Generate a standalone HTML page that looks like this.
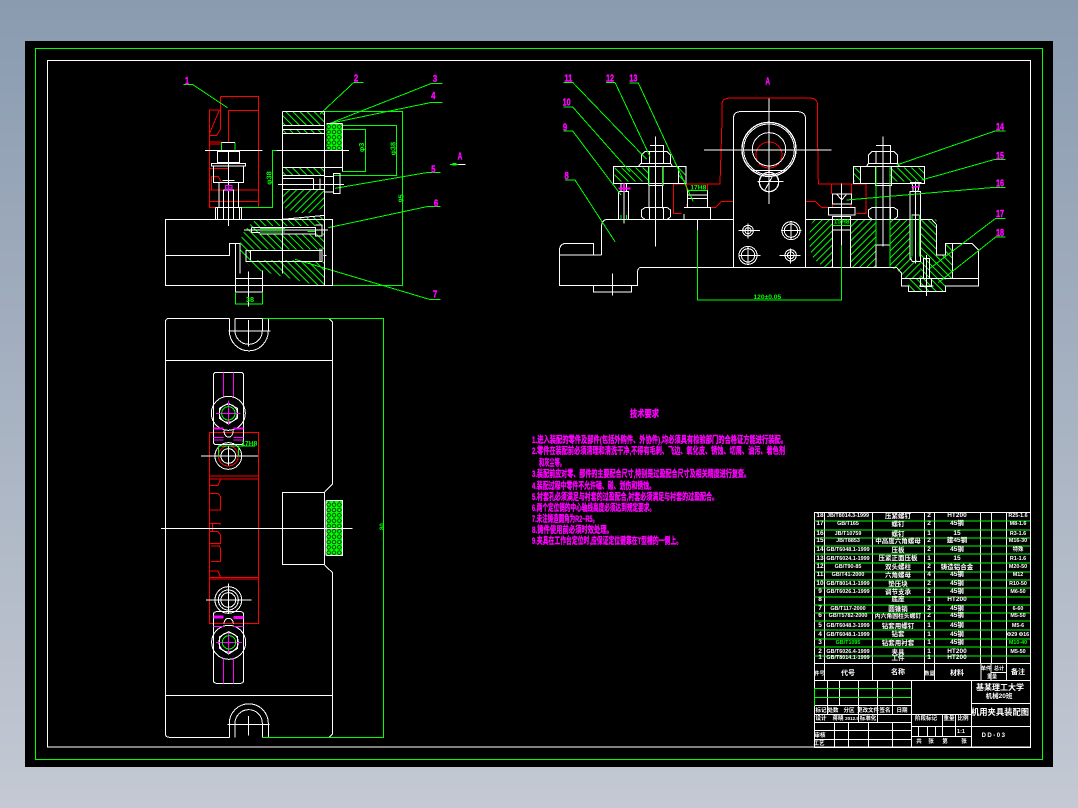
<!DOCTYPE html>
<html><head><meta charset="utf-8"><style>
html,body{margin:0;padding:0;width:1078px;height:808px;overflow:hidden;background:linear-gradient(#8a9bb0,#c4c9d3)}
svg{display:block;position:absolute;left:0;top:0}
text{font-family:"Liberation Sans","WenQuanYi Zen Hei","Noto Sans CJK SC",sans-serif}
.c{font-size:5.4px}
.l text{fill:#f0f;stroke:#f0f;stroke-width:1.2px;font-size:30px;font-weight:bold;text-anchor:middle}
</style></head><body>
<svg width="1078" height="808" viewBox="0 0 1078 808" shape-rendering="crispEdges" fill="none">
<defs>
<pattern id="h1" width="15" height="15" patternUnits="userSpaceOnUse" patternTransform="rotate(45)"><rect width="15" height="3" fill="#0f0"/></pattern>
<pattern id="h2" width="15" height="15" patternUnits="userSpaceOnUse" patternTransform="rotate(-45)"><rect width="15" height="3" fill="#0f0"/></pattern>
<pattern id="k" width="16" height="16" patternUnits="userSpaceOnUse"><rect width="16" height="16" fill="#0f0"/><circle cx="8" cy="8" r="5.5" fill="none" stroke="#000" stroke-width="2"/></pattern>
</defs>
<rect x="25" y="41" width="1028" height="726" fill="#000"/>
<rect x="35.5" y="48.5" width="1007" height="711" stroke="#0f0"/>
<rect x="47.5" y="60.5" width="983" height="686.5" stroke="#fff"/>

<!-- VIEW 1 -->
<g transform="translate(150 60) scale(.33333)" stroke-width="3">
<g stroke="none">
<path fill="url(#h1)" d="M397,154H524V196H397ZM397,208H524V220H397ZM397,322H524V346H397Z"/>
<path fill="url(#h2)" d="M397,390H524V440Q460,480 397,440Z"/>
<path fill="url(#h1)" d="M320,478L397,478L524,466V498H330V520H524V568H300V600H430L524,606V676H500L320,630Q275,610 270,560Q270,510 320,478Z"/>
<rect x="530" y="190" width="48" height="80" fill="url(#k)"/>
</g>
<g stroke="#f00">
<path d="M211,109H325V442H178V150H208L178,222M211,109V208L200,226H178M235,248V151H325M178,246H214M178,252H214M178,326H235M178,390H325M178,424H325M184,350H205L215,368M184,350V390"/>
</g>
<g stroke="#0f0">
<path d="M215,248V272M255,248V272M268,442H367V271H397M524,154H758V676H548M578,208H647V335H578M578,196H740V346H550"/>
<path d="M100,73H127L232,143M640,67H612L510,162M878,70H845L540,190M878,127H845L540,190M872,337H835L555,385M872,439H835L535,503M872,718H838L435,598M900,313H925"/>
<path d="M256,698V732H338V698M330,505H405M330,516H405M472,514H496" />
</g>
<g stroke="#fff">
<path d="M46,478H548V676H46ZM46,586H238V550H270M256,550V696M338,632V696M256,655H338M256,696H338M295,635V740"/>
<path d="M215,248H255M202,274H268V308H202ZM235,274V308M184,310H287V318H184ZM190,318V368H281V318M218,362H253M207,368V442M265,368V442M220,390H250V478M220,390V478M196,442H275V478M196,442V478M202,442V478M268,442V478M235,275V498M165,271H338"/>
<path d="M397,154H524V676M397,154V640M397,196H524M397,220H524M397,208H524M380,271H597M397,322H578M397,346H524M524,190V270M578,190V335M530,190H578"/>
<path d="M397,356H490M397,388H524M490,356V388M510,356V388M524,350H550M524,396H550M550,340H570V400H550ZM384,373H582"/>
<path d="M282,510H534M305,503H496V528H516V495H496M330,522H496M305,518H330M305,503V518"/>
<path d="M288,572H516V604H288ZM302,572V600M516,566V606M510,566V606M520,586H530"/>
<path d="M397,478L524,466M270,550V640"/>
</g>
<rect x="925" y="312" width="22" height="3" fill="#fff"/>
<rect x="908" y="309" width="12" height="8" fill="#0f0"/>
<path d="M226,376H246V392H226ZM236,376V392M226,384H246" stroke="#f0f"/>
<g class="l">
<text x="111" y="72" textLength="12" lengthAdjust="spacingAndGlyphs">1</text><text x="618" y="64" textLength="13" lengthAdjust="spacingAndGlyphs">2</text><text x="855" y="66" textLength="13" lengthAdjust="spacingAndGlyphs">3</text><text x="850" y="117" textLength="13" lengthAdjust="spacingAndGlyphs">4</text><text x="850" y="337" textLength="13" lengthAdjust="spacingAndGlyphs">5</text><text x="858" y="439" textLength="13" lengthAdjust="spacingAndGlyphs">6</text><text x="855" y="713" textLength="13" lengthAdjust="spacingAndGlyphs">7</text><text x="930" y="298" textLength="14" lengthAdjust="spacingAndGlyphs">A</text>
</g>
<g fill="#0f0" font-size="22" font-weight="bold" text-anchor="middle">
<text transform="translate(364 354) rotate(-90)">φ38</text>
<text transform="translate(642 262) rotate(-90)">φ3</text>
<text transform="translate(736 266) rotate(-90)">φ38</text>
<text transform="translate(760 415) rotate(-90)">95</text>
<text x="300" y="726">38</text>
</g>
</g>

<!-- VIEW 2 -->
<g transform="translate(550 60) scale(.33333)" stroke-width="3">
<g stroke="none">
<path fill="url(#h1)" d="M193,322H295V365H193ZM385,322H408V365H385ZM912,322H930V365H912ZM1020,322H1122V365H1020Z"/>
<path fill="url(#h2)" d="M790,478Q765,540 790,595L820,622H848V478ZM903,478H978V622H903Z"/>
<path fill="url(#h2)" d="M1022,478H1082V590L1112,606V655H1055V640L1022,622Z"/>
<path fill="url(#h1)" d="M1112,478H1160V585H1187V550H1207V655H1187V695H1075V655H1112ZM1112,478V590L1140,606V655H1112Z"/>
</g>
<g stroke="#f00">
<path d="M370,372H510L516,184V130Q518,115 540,114H780Q800,115 802,130V184L805,372H948V460H920M370,372V460H395"/>
<path d="M410,372V392M472,372V392M845,372V402M905,372V402M470,442H498L514,424H550M767,424H795L815,442H835M410,432L412,442M472,432V442M848,432V442M903,432V442"/>
<circle cx="657" cy="285" r="39"/>
</g>
<g stroke="#fff">
<path d="M550,622V175Q552,155 570,155H745Q765,157 767,175V622"/>
<circle cx="657" cy="268" r="81" stroke-width="4"/><circle cx="657" cy="268" r="76"/><circle cx="657" cy="268" r="50"/>
<circle cx="657" cy="366" r="29" stroke-width="4"/>
<path d="M462,270H845M657,115V432M622,365H700M607,332H707M645,390L672,340"/>
<circle cx="594" cy="512" r="16"/><circle cx="594" cy="512" r="9"/><path d="M565,512H630M594,490V535"/>
<circle cx="723" cy="512" r="27"/><circle cx="723" cy="512" r="20"/><path d="M693,512H755M723,485V540"/>
<circle cx="594" cy="586" r="27"/><circle cx="594" cy="586" r="20"/><path d="M565,586H632M594,558V615"/>
<circle cx="722" cy="586" r="17"/><circle cx="722" cy="586" r="10"/><path d="M688,586H752M722,565V610"/>
<path d="M155,585V495Q157,478 175,478H550M767,478H1145L1160,495V585H1187V550H1265L1285,570V678H1187V695H1075V678H1055V640L1040,622H270Q262,628 262,640V676H28V570Q30,550 50,550H130V585H155M28,585H130M130,676V696H245V676M187,640V706M550,622H1040M848,622V470H902V622M1055,655H1285M1207,550V655"/>
<path d="M190,320H408V370H190ZM297,320V445M337,320V445M295,320V376M339,320V376H295M386,320V370M265,320L272,310H362L368,320M274,310V285L285,275H352L362,285V310M298,310V275M340,310V275M300,256H340V275M316,230V560M274,450L285,443H352L362,450V470L352,478H285L274,470ZM298,443V478M340,443V478"/>
<path d="M205,395H236V478H205ZM205,370H240M213,370V395M230,370V395M222,370V490"/>
<path d="M412,392H472V442H412ZM412,405H472M412,415H472M402,442H482V478H402M402,462V478M482,462V478"/>
<path d="M910,320H1124V370H910ZM978,320V622M1020,320V622M976,320V376H1024V320M932,320V370M949,320L955,310H1043L1049,320M955,310V285L966,275H1032L1043,285V310M978,310V275M1022,310V275M978,256H1022V275M999,230V560M955,450L966,443H1032L1043,450V470L1032,478H966L955,470ZM978,443V478M1022,443V478M978,555H1020"/>
<path d="M1080,395H1112V605H1088L1080,595ZM1080,368H1115M1086,368L1090,395M1108,368L1104,395M1097,365V610M1085,465H1108"/>
<path d="M847,402H904V432H847ZM860,402L875,420L890,402M835,442H915V465H835ZM875,370V555M848,510H902"/>
<path d="M1120,595H1138V655H1145V680H1112V655H1120ZM1129,585V708M1107,678H1150"/>
<path d="M442,480V510"/>
</g>
<g stroke="#0f0">
<path d="M40,67H68L290,298M168,67H195L300,290M238,69H265L430,425M40,141H68L240,335M40,213H68L213,405M45,360H75L195,545"/>
<path d="M1367,213H1335L1040,315M1367,298H1335L1115,360M1367,382H1335L890,420M1367,475H1337L1140,625M1367,531H1337L1165,668"/>
<path d="M442,510V720H875V555M412,392H472M848,497H902M297,320V376M337,320V376M978,320V440M1020,320V376M978,478V555M1020,478V622M1086,465V590M1108,465V590M213,465V478M230,465V478"/>
</g>
<path d="M205,385H242M222,370V395" stroke="#f0f" stroke-width="6"/>
<path d="M1085,380H1110" stroke="#f0f" stroke-width="4"/>
<g class="l">
<text x="55" y="64" textLength="24" lengthAdjust="spacingAndGlyphs">11</text><text x="180" y="64" textLength="24" lengthAdjust="spacingAndGlyphs">12</text><text x="250" y="64" textLength="24" lengthAdjust="spacingAndGlyphs">13</text><text x="50" y="137" textLength="24" lengthAdjust="spacingAndGlyphs">10</text><text x="45" y="211" textLength="13" lengthAdjust="spacingAndGlyphs">9</text><text x="50" y="357" textLength="13" lengthAdjust="spacingAndGlyphs">8</text><text x="653" y="73" textLength="14" lengthAdjust="spacingAndGlyphs">A</text>
<text x="1350" y="210" textLength="24" lengthAdjust="spacingAndGlyphs">14</text><text x="1350" y="297" textLength="24" lengthAdjust="spacingAndGlyphs">15</text><text x="1350" y="380" textLength="24" lengthAdjust="spacingAndGlyphs">16</text><text x="1350" y="471" textLength="24" lengthAdjust="spacingAndGlyphs">17</text><text x="1350" y="528" textLength="24" lengthAdjust="spacingAndGlyphs">18</text>
</g>
<g fill="#0f0" font-size="20" font-weight="bold" text-anchor="middle">
<text x="445" y="388">17H8</text><text x="875" y="490">15H8</text><text x="652" y="717">120±0.05</text>
</g>
</g>

<!-- VIEW 3 -->
<g transform="translate(150 310) scale(.33333)" stroke-width="3">
<rect x="530" y="572" width="48" height="164" fill="url(#k)"/>
<g stroke="#f00">
<path d="M178,367H325V940H178ZM178,498H325M178,507H325M178,802H325M178,807H325"/>
<path d="M178,526H204L212,508M178,550H204L212,560V600H178M178,604V640H210V645M188,640V665H178M178,665H204L212,675V700H178M183,708H208L212,715V755H183M178,783H204L212,802"/>
<circle cx="235" cy="438" r="30"/>
</g>
<g stroke="#fff">
<path d="M238,25H58Q46,25 46,37V1270Q46,1282 58,1282H238M255,25H537L548,37V522L524,546M524,766L548,788V1272L537,1282H355M238,25V62M255,25V62M337,25V62M355,25V62M238,62A58,60 0 0 0 355,62M255,62A41,41 0 0 0 337,62M46,151H548M46,1156H548M238,1282V1240M255,1282V1240M337,1282V1240M355,1282V1240M238,1240A58,58 0 0 1 355,1240M255,1240A41,41 0 0 1 337,1240M295,30V110M235,63H362M295,1218V1277M232,1243H358"/>
<rect x="397" y="547" width="127" height="217"/>
<path d="M33,655H608M528,572V736M530,572H578V736H530"/>
<path d="M190,197Q190,187 200,187H272Q281,187 281,197V395Q281,404 272,404H200Q190,404 190,395Z"/>
<circle cx="235" cy="310" r="51"/><path d="M235,280L262,295V325L235,342L208,325V295Z"/><circle cx="235" cy="310" r="27"/>
<path d="M222,362A13,18 0 0 0 250,362"/>
<circle cx="235" cy="438" r="40"/><circle cx="235" cy="438" r="22"/><path d="M153,438H324M235,410V466"/>
<circle cx="235" cy="870" r="40"/><circle cx="235" cy="870" r="30"/><circle cx="235" cy="870" r="22"/><path d="M168,870H305M235,820V910"/>
<path d="M190,915Q190,905 200,905H272Q281,905 281,915V1110Q281,1120 272,1120H200Q190,1120 190,1110Z"/>
<circle cx="236" cy="997" r="51"/><path d="M236,965L263,980V1015L236,1032L209,1015V980Z"/><circle cx="236" cy="997" r="29"/>
<path d="M222,940A13,14 0 0 1 250,940"/>
</g>
<g stroke="#f0f">
<path d="M220,187V260M250,187V260M198,310H272M235,272V345M190,382H220M250,382H281M190,390H220M250,390H281M220,1045V1120M250,1045V1120M198,997H276M236,968V1030M190,950H222M250,950H281"/>
<path d="M190,356H220M250,356H281" stroke-width="6"/>
<path d="M190,921H220M250,923H281" stroke-width="9"/>
</g>
<g stroke="#0f0">
<path d="M337,25H700V1282H337"/>
<circle cx="235" cy="310" r="20"/><circle cx="237" cy="997" r="20"/>
<path d="M205,440V408H265V440M265,408H315"/>
</g>
<text x="298" y="406" fill="#0f0" font-size="20" font-weight="bold" text-anchor="middle">17H8</text>
<text transform="translate(702 650) rotate(-90)" fill="#0f0" font-size="18" font-weight="bold" text-anchor="middle">80</text>
</g>

<!-- TECH -->
<g fill="#f0f" stroke="#f0f" stroke-width=".35" font-size="9.5" font-weight="bold" shape-rendering="auto">
<text x="630" y="417" textLength="29" lengthAdjust="spacingAndGlyphs">技术要求</text>
<text x="532" y="443" textLength="255" lengthAdjust="spacingAndGlyphs">1.进入装配的零件及部件(包括外购件、外协件),均必须具有检验部门的合格证方能进行装配。</text>
<text x="532" y="454" textLength="253" lengthAdjust="spacingAndGlyphs">2.零件在装配前必须清理和清洗干净,不得有毛刺、飞边、氧化皮、锈蚀、切屑、油污、着色剂</text>
<text x="539" y="466" textLength="26" lengthAdjust="spacingAndGlyphs">和灰尘等。</text>
<text x="532" y="477" textLength="218" lengthAdjust="spacingAndGlyphs">3.装配前应对零、部件的主要配合尺寸,特别是过盈配合尺寸及相关精度进行复查。</text>
<text x="532" y="489" textLength="123" lengthAdjust="spacingAndGlyphs">4.装配过程中零件不允许磕、碰、划伤和锈蚀。</text>
<text x="532" y="500" textLength="186" lengthAdjust="spacingAndGlyphs">5.衬套孔必须满足与衬套的过盈配合,衬套必须满足与衬套的过盈配合。</text>
<text x="532" y="511" textLength="123" lengthAdjust="spacingAndGlyphs">6.两个定位销的中心轴线高度必须达到规定要求。</text>
<text x="532" y="522" textLength="66" lengthAdjust="spacingAndGlyphs">7.未注铸造圆角为R2~R5。</text>
<text x="532" y="533" textLength="81" lengthAdjust="spacingAndGlyphs">8.铸件使用前必须时效处理。</text>
<text x="532" y="544" textLength="150" lengthAdjust="spacingAndGlyphs">9.夹具在工作台定位时,应保证定位键靠在T型槽的一侧上。</text>
</g>

<!-- TABLE -->
<g stroke="#fff">
<path d="M814.5,512.5H1030.5V747.5H814.5ZM824.5,512V680M872.5,512V680M924.5,512V680M934.5,512V680M980.5,512V663M991.5,512V663M1006.5,512V680"/>
<path d="M814,663.5H1030M814,680.5H1030M991.5,672.5H1006M991,663V680M981,663V680"/>
<path d="M827.5,680V714M839.5,680V706M858.5,680V722M877.5,680V722M892.5,680V714M911.5,680V747"/>
<path d="M814,705.5H911M814,714.5H911M814,722.5H911M814,730.5H911M814,739.5H911"/>
<path d="M834.5,722V747M848.5,722V747M868.5,722V747M892.5,722V747"/>
<path d="M911,714.5H972M911,726.5H972M911,736.5H972M942.5,714V737M955.5,714V737M918.5,726V737M927.5,726V737M935.5,726V737M971.5,680V747M971,703.5H1030M971,726.5H1030"/>
</g>
<g stroke="#0f0">
<path d="M814,521H1030M814,530H1030M814,538H1030M814,546H1030M814,554H1030M814,563H1030M814,572H1030M814,580H1030M814,588H1030M814,597H1030M814,605H1030M814,613H1030M814,621H1030M814,630H1030M814,639H1030M814,647H1030M814,656H1030"/>
<path d="M814,688.5H911M814,697.5H911M814.5,688V706"/>
</g>
<g fill="#fff" font-size="6.5" font-weight="bold" text-anchor="middle" shape-rendering="auto">
<g><text x="820" y="517">18</text><text class="c" x="848" y="517">JB/T8014.3-1999</text><text x="898" y="518">压紧螺钉</text><text x="929" y="517">2</text><text x="957" y="517">HT200</text><text class="c" x="1018" y="517">R25-1.6</text></g>
<g><text x="820" y="525">17</text><text class="c" x="848" y="525">GB/T165</text><text x="898" y="526">螺钉</text><text x="929" y="525">2</text><text x="957" y="525">45钢</text><text class="c" x="1018" y="525">M8-1.6</text></g>
<g><text x="820" y="535">16</text><text class="c" x="848" y="535">JB/T10759</text><text x="898" y="536">螺钉</text><text x="929" y="535">1</text><text x="957" y="535">15</text><text class="c" x="1018" y="535">R3-1.6</text></g>
<g><text x="820" y="542">15</text><text class="c" x="848" y="542">JB/T8853</text><text x="898" y="543">中高度六角螺母</text><text x="929" y="542">2</text><text x="957" y="542">建45钢</text><text class="c" x="1018" y="542">M16-30</text></g>
<g><text x="820" y="551">14</text><text class="c" x="848" y="551">GB/T6048.1-1999</text><text x="898" y="552">压板</text><text x="929" y="551">2</text><text x="957" y="551">45钢</text><text class="c" x="1018" y="551">特殊</text></g>
<g><text x="820" y="560">13</text><text class="c" x="848" y="560">GB/T6024.1-1999</text><text x="898" y="560">压紧正面压板</text><text x="929" y="560">1</text><text x="957" y="560">15</text><text class="c" x="1018" y="560">R1-1.6</text></g>
<g><text x="820" y="568">12</text><text class="c" x="848" y="568">GB/T90-85</text><text x="898" y="569">双头螺柱</text><text x="929" y="568">2</text><text x="957" y="569">铸造铝合金</text><text class="c" x="1018" y="568">M20-50</text></g>
<g><text x="820" y="576">11</text><text class="c" x="848" y="576">GB/T41-2000</text><text x="898" y="577">六角螺母</text><text x="929" y="576">4</text><text x="957" y="576">45钢</text><text class="c" x="1018" y="576">M12</text></g>
<g><text x="820" y="585">10</text><text class="c" x="848" y="585">GB/T8014.1-1999</text><text x="898" y="586">垫压块</text><text x="929" y="585">2</text><text x="957" y="585">45钢</text><text class="c" x="1018" y="585">R10-50</text></g>
<g><text x="820" y="593">9</text><text class="c" x="848" y="593">GB/T6026.1-1999</text><text x="898" y="594">调节支承</text><text x="929" y="593">2</text><text x="957" y="593">45钢</text><text class="c" x="1018" y="593">M6-50</text></g>
<g><text x="820" y="601">8</text><text x="898" y="601">底座</text><text x="929" y="601">1</text><text x="957" y="601">HT200</text></g>
<g><text x="820" y="610">7</text><text class="c" x="848" y="610">GB/T117-2000</text><text x="898" y="611">圆锥销</text><text x="929" y="610">2</text><text x="957" y="610">45钢</text><text class="c" x="1018" y="610">6-60</text></g>
<g><text x="820" y="617">6</text><text class="c" x="848" y="617">GB/T5782-2000</text><text x="898" y="618" font-size="5.8">内六角圆柱头螺钉</text><text x="929" y="617">2</text><text x="957" y="617">45钢</text><text class="c" x="1018" y="617">M5-50</text></g>
<g><text x="820" y="627">5</text><text class="c" x="848" y="627">GB/T6048.3-1999</text><text x="898" y="628">钻套用螺钉</text><text x="929" y="627">1</text><text x="957" y="627">45钢</text><text class="c" x="1018" y="627">M5-6</text></g>
<g><text x="820" y="636">4</text><text class="c" x="848" y="636">GB/T6048.1-1999</text><text x="898" y="636">钻套</text><text x="929" y="636">1</text><text x="957" y="636">45钢</text><text class="c" x="1018" y="636">Φ29 Φ16</text></g>
<g><text x="820" y="644">3</text><text class="c" x="848" y="644" fill="#0f0">GB/T1095</text><text x="898" y="645">钻套用衬套</text><text x="929" y="644">1</text><text x="957" y="644">45钢</text><text class="c" x="1018" y="644" fill="#0f0">M10-40</text></g>
<g><text x="820" y="653">2</text><text class="c" x="848" y="653">GB/T6026.4-1999</text><text x="898" y="654">夹具</text><text x="929" y="653">1</text><text x="957" y="653">HT200</text><text class="c" x="1018" y="653">M5-50</text></g>
<g><text x="820" y="659">1</text><text class="c" x="848" y="659">GB/T8014.1-1999</text><text x="898" y="660">工件</text><text x="929" y="659">1</text><text x="957" y="659">HT200</text></g>
<g font-size="7"><text x="819.5" y="675" font-size="5">件号</text><text x="848" y="675">代号</text><text x="898" y="674">名称</text><text x="929.5" y="675" font-size="5">数量</text><text x="957" y="675">材料</text><text x="986" y="670" font-size="5">单件</text><text x="999" y="670" font-size="5">总计</text><text x="992" y="678" font-size="5">重量</text><text x="1018" y="674">备注</text></g>
<g font-size="5.5"><text x="821" y="712">标记</text><text x="833" y="712">处数</text><text x="849" y="712">分区</text><text x="868" y="712">更改文件</text><text x="885" y="712">签名</text><text x="902" y="712">日期</text>
<text x="821" y="720">设计</text><text x="838" y="720">蒋晓</text><text x="852" y="720" font-size="4.5">2012.5</text><text x="868" y="720">标准化</text>
<text x="820" y="737">审核</text><text x="819" y="745">工艺</text>
<text x="926" y="720">阶段标记</text><text x="949" y="720">重量</text><text x="963" y="720">比例</text><text x="961" y="733">1:1</text>
<text x="919" y="743">共</text><text x="931" y="743">张</text><text x="945" y="743">第</text><text x="964" y="743">张</text></g>
<text x="1000" y="690" font-size="8">基某理工大学</text>
<text x="999" y="698" font-size="6.5">机械20班</text>
<text x="1000" y="715" font-size="8.3">机用夹具装配图</text>
<text x="994" y="737" font-size="6" letter-spacing="1.5">DD-03</text>
</g>
</svg>
</body></html>
